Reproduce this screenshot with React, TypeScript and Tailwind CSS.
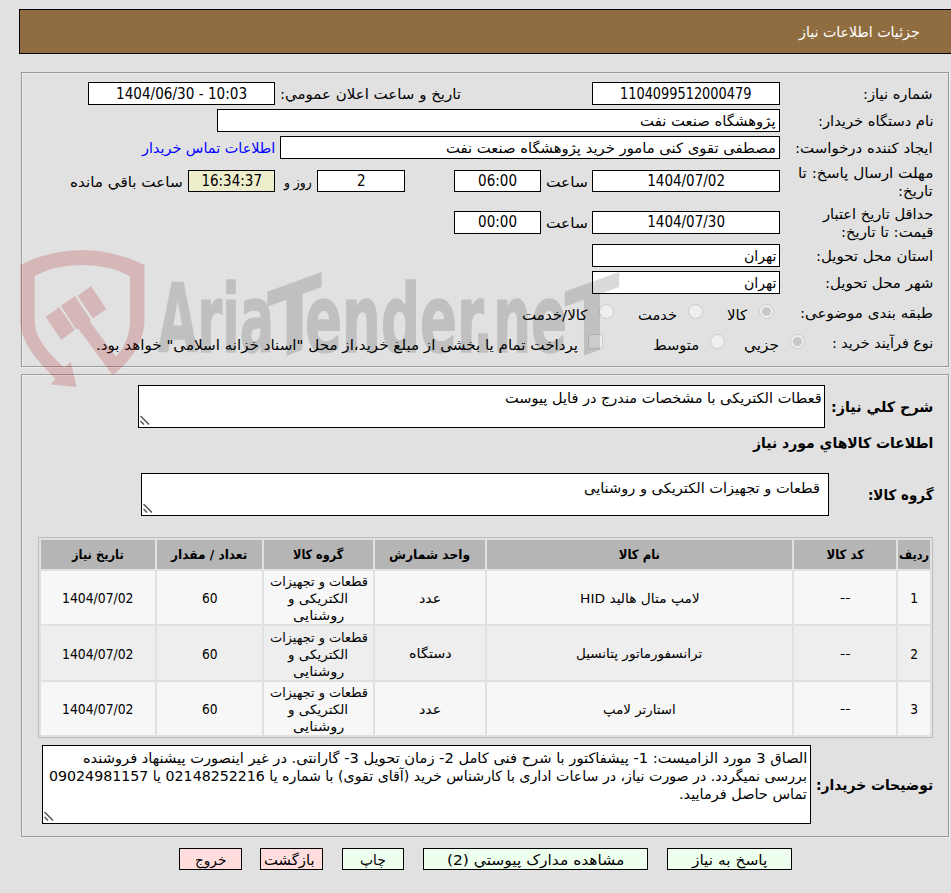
import React, { useLayoutEffect, useRef, useState } from "react";

type TextProps = { w: number; children: React.ReactNode; className?: string; ltr?: boolean };

// A single line of text condensed or widened to a given width.
function T({ w, children, className = "", ltr = false }: TextProps) {
  const ref = useRef<HTMLSpanElement>(null);
  const [scale, setScale] = useState(1);
  useLayoutEffect(() => {
    if (ref.current) setScale(w / ref.current.offsetWidth);
  }, [w]);
  return (
    <span className={`flex shrink-0 whitespace-nowrap ${className}`} style={{ width: w }}>
      <span ref={ref} dir={ltr ? "ltr" : "rtl"} className="inline-block shrink-0 origin-right" style={{ transform: `scaleX(${scale})` }}>
        {children}
      </span>
    </span>
  );
}

// Digits are set slightly larger than the surrounding Persian text.
function Num({ w, children }: { w: number; children: React.ReactNode }) {
  return <T w={w} ltr className="text-[15px]">{children}</T>;
}

function Field({ className, children }: { className: string; children?: React.ReactNode }) {
  return <div className={`flex shrink-0 items-center border border-black ${className}`}>{children}</div>;
}

function Row({ className = "h-[27px]", label, children }: { className?: string; label: React.ReactNode; children: React.ReactNode }) {
  return (
    <div className={`flex items-center ${className}`}>
      <div className="w-[153px] shrink-0">{label}</div>
      {children}
    </div>
  );
}

function Radio({ checked = false, className = "" }: { checked?: boolean; className?: string }) {
  return (
    <span className={`mb-[3px] flex size-[15px] shrink-0 items-center justify-center rounded-full border border-[#cbcbcb] bg-[#efefef] ${className}`}>
      {checked && <span className="size-[9px] rounded-full bg-[#c8c8c8]" />}
    </span>
  );
}

function Area({ className, children }: { className: string; children: React.ReactNode }) {
  return (
    <div className={`relative shrink-0 border border-black bg-white ${className}`}>
      {children}
      <svg className="absolute bottom-[2px] left-[1px]" width="10" height="10" viewBox="0 0 10 10" stroke="#555" strokeWidth="1.5">
        <path d="M0.5 1 L9 9.500 M0.500 6 L4 9.500" />
      </svg>
    </div>
  );
}

function Watermark() {
  return (
    <svg direction="ltr" className="pointer-events-none absolute left-0 top-[240px]" width="640" height="160" viewBox="0 240 640 160">
      <g fill="#b4282d" opacity="0.22">
        <path d="M20.300 265 Q50 250 82 250 Q114 250 144.500 265 V320 C144.500 342 130 362 112.700 375.300 L78.500 329 L75.700 329 L61 305.700 L75 296 L90.500 319.500 L90 322 L116 356.700 Q130 341 130 320 V276 Q109 265 82 265 Q55 265 34.700 276 V320 C34.700 339 48 352 64.300 367.700 L70.700 361.700 L76.700 387 L50.700 384.500 L55.300 379 C38 361 20.300 343 20.300 320 Z" />
        <path d="M45.700 316.700 L59.300 307.300 L74.700 330 L61.300 340 Z" />
        <path d="M77.700 296 L91 286 L106.300 309 L93 318.500 Z" />
      </g>
      <g opacity="0.14" fill="#000" stroke="#000" strokeWidth="1.5" strokeLinejoin="round" className="font-['DejaVu_Sans',sans-serif] text-[95px] font-bold">
        <text x="158" y="352" textLength="116" lengthAdjust="spacingAndGlyphs">Aria</text>
        <text transform="translate(294.500 352) skewY(-20)" x="-27" y="0" textLength="54" lengthAdjust="spacingAndGlyphs">T</text>
        <text x="305" y="352" textLength="179" lengthAdjust="spacingAndGlyphs">ender</text>
        <text x="473" y="352" textLength="94" lengthAdjust="spacingAndGlyphs">.ne</text>
        <text transform="translate(592 352) skewY(-20)" x="-27" y="0" textLength="54" lengthAdjust="spacingAndGlyphs">T</text>
      </g>
    </svg>
  );
}

const cols = [
  { t: "ردیف", w: 30 }, { t: "کد کالا", w: 38 }, { t: "نام کالا", w: 41 }, { t: "واحد شمارش", w: 81 },
  { t: "گروه کالا", w: 50 }, { t: "تعداد / مقدار", w: 76 }, { t: "تاریخ نیاز", w: 52 },
];
const items = [
  { name: "لامپ متال هالید HID", nw: 120, unit: "عدد", uw: 22, bg: "bg-[#f7f7f7]" },
  { name: "ترانسفورماتور پتانسیل", nw: 126, unit: "دستگاه", uw: 43, bg: "bg-[#eeeeee]" },
  { name: "استارتر لامپ", nw: 73, unit: "عدد", uw: 22, bg: "bg-[#f7f7f7]" },
];

const panel = "border border-[#9a9a9a] shadow-[inset_1px_1px_#eeeeee,1px_1px_#eeeeee]";

export default function App() {
  return (
    <div dir="rtl" className="relative h-[893px] w-[951px] overflow-hidden bg-[#e1e1e1] pt-[9px] font-['DejaVu_Sans_Condensed','DejaVu_Sans',sans-serif] text-[14.2px] leading-[18px] text-black">
      <header className="ml-[19px] flex h-[45px] items-center border-y border-l border-black bg-[#8f6d40] pr-[31px] text-white">
        <T w={121}>جزئیات اطلاعات نیاز</T>
      </header>

      <section className={`ml-[21px] mr-[2px] mt-[18px] h-[295px] pr-[15px] pt-[7px] ${panel}`}>
        <Row label={<T w={70}>شماره نیاز:</T>}>
          <Field className="h-[23px] w-[188px] justify-center bg-white"><Num w={131}>1104099512000479</Num></Field>
          <T w={181} className="mr-[131px]">تاریخ و ساعت اعلان عمومي:</T>
          <Field className="mr-[5px] h-[23px] w-[187px] justify-center bg-white"><Num w={131}>1404/06/30 - 10:03</Num></Field>
        </Row>
        <Row label={<T w={116}>نام دستگاه خریدار:</T>}>
          <Field className="h-[23px] w-[563px] bg-white pr-[3px]"><T w={136}>پژوهشگاه صنعت نفت</T></Field>
        </Row>
        <Row label={<T w={138}>ایجاد کننده درخواست:</T>}>
          <Field className="h-[23px] w-[500px] bg-white pr-[3px]"><T w={330}>مصطفی تقوی کنی مامور خرید پژوهشگاه صنعت نفت</T></Field>
          <T w={133} className="mr-[5px] text-[#0000ff]">اطلاعات تماس خریدار</T>
        </Row>
        <Row className="h-[41px]" label={<><T w={135}>مهلت ارسال پاسخ: تا</T><T w={35}>تاریخ:</T></>}>
          <Field className="mb-px h-[22px] w-[188px] justify-center bg-white"><Num w={78}>1404/07/02</Num></Field>
          <T w={42} className="mr-[4px]">ساعت</T>
          <Field className="mb-px mr-[5px] h-[22px] w-[87px] justify-center bg-white"><Num w={39}>06:00</Num></Field>
          <Field className="mb-px mr-[49px] h-[22px] w-[88px] justify-center bg-white"><Num w={9}>2</Num></Field>
          <T w={28} className="mr-[5px]">روز و</T>
          <Field className="mb-px mr-[9px] h-[22px] w-[87px] justify-center bg-[#eeeecc]"><Num w={61}>16:34:37</Num></Field>
          <T w={113} className="mr-[5px]">ساعت باقي مانده</T>
        </Row>
        <Row className="h-[40px]" label={<div className="pt-px"><T w={110}>حداقل تاریخ اعتبار</T><T w={92}>قیمت: تا تاریخ:</T></div>}>
          <Field className="h-[23px] w-[188px] justify-center bg-white"><Num w={78}>1404/07/30</Num></Field>
          <T w={42} className="mr-[4px] pt-px">ساعت</T>
          <Field className="mr-[5px] h-[23px] w-[87px] justify-center bg-white"><Num w={39}>00:00</Num></Field>
        </Row>
        <Row label={<T w={117}>استان محل تحویل:</T>}>
          <Field className="h-[23px] w-[188px] bg-white pr-[3px]"><T w={32}>تهران</T></Field>
        </Row>
        <Row label={<T w={108}>شهر محل تحویل:</T>}>
          <Field className="h-[23px] w-[188px] bg-white pr-[3px]"><T w={32}>تهران</T></Field>
        </Row>
        <Row className="h-[33px]" label={<T w={133}>طبقه بندی موضوعی:</T>}>
          <Radio checked className="mr-[6px]" />
          <T w={20} className="mr-[12px] pt-[5px]">کالا</T>
          <Radio className="mr-[24px]" />
          <T w={39} className="mr-[11px] pt-[5px]">خدمت</T>
          <Radio className="mr-[24px]" />
          <T w={66} className="mr-[11px] pt-[5px]">کالا/خدمت</T>
        </Row>
        <Row className="h-[27px]" label={<T w={101}>نوع فرآیند خرید :</T>}>
          <Radio checked className="-mr-[25px]" />
          <T w={35} className="mr-[11px] pt-[4px]">جزیي</T>
          <Radio className="mr-[19px]" />
          <T w={46} className="mr-[11px] pt-[4px]">متوسط</T>
          <span className="mb-[3px] mr-[50px] size-[15px] shrink-0 rounded-[2px] border border-[#cbcbcb] bg-[#efefef]" />
          <T w={482} className="mr-[10px] pt-[4px]">پرداخت تمام یا بخشی از مبلغ خرید،از محل "اسناد خزانه اسلامی" خواهد بود.</T>
        </Row>
      </section>

      <section className={`ml-[21px] mr-[2px] mt-[7px] h-[463px] pr-[15px] pt-[10px] ${panel}`}>
        <div className="flex items-center">
          <T w={102} className="text-[14.5px] font-bold">شرح کلي نیاز:</T>
          <Area className="mr-[6px] h-[43px] w-[687px] pr-[2px] pt-[3px]"><T w={317}>قعطات الکتریکی با مشخصات مندرج در فایل پیوست</T></Area>
        </div>
        <div className="flex h-[45px] items-start pt-[6px]"><T w={180} className="text-[14.5px] font-bold">اطلاعات کالاهاي مورد نیاز</T></div>
        <div className="flex items-center">
          <T w={65} className="text-[14.5px] font-bold">گروه کالا:</T>
          <Area className="mr-[39px] h-[43px] w-[688px] pr-[8px] pt-[5px]"><T w={236}>قطعات و تجهیزات الکتریکی و روشنایی</T></Area>
        </div>

        <div className="mt-[21px] grid h-[201px] w-[895px] grid-cols-[32px_102px_305px_110px_109px_105px_114px] grid-rows-[29px_53px_54px_53px] gap-[2px] border border-[#bcbcbc] p-[2px] text-[13px] leading-[17px]">
          {cols.map((c) => (
            <div key={c.t} className="flex items-center justify-center bg-[#b5b5b5] font-bold"><T w={c.w}>{c.t}</T></div>
          ))}
          {items.map((it, i) => (
            <React.Fragment key={i}>
              <div className={`flex items-center justify-center pt-[2px] text-[13.6px] ${it.bg}`}><T w={8}>{i + 1}</T></div>
              <div className={`flex items-center justify-center ${it.bg}`}><T w={10}>--</T></div>
              <div className={`flex items-center justify-center pt-px ${it.bg}`}><T w={it.nw}>{it.name}</T></div>
              <div className={`flex items-center justify-center pt-px ${it.bg}`}><T w={it.uw}>{it.unit}</T></div>
              <div className={`flex flex-col items-center justify-center pt-[2px] ${it.bg}`}>
                <T w={98}>قطعات و تجهیزات</T>
                <T w={60}>الکتریکی و</T>
                <T w={51}>روشنایی</T>
              </div>
              <div className={`flex items-center justify-center pt-[2px] text-[13.6px] ${it.bg}`}><T w={16}>60</T></div>
              <div className={`flex items-center justify-center pt-[2px] text-[13.6px] ${it.bg}`}><T w={71} ltr>1404/07/02</T></div>
            </React.Fragment>
          ))}
        </div>

        <div className="mt-[7px] flex items-center">
          <T w={117} className="text-[14.5px] font-bold">توضیحات خریدار:</T>
          <Area className="mr-[5px] h-[79px] w-[769px] pr-[3px] pt-[3px]">
            <T w={724}>الصاق 3 مورد الزامیست: 1- پیشفاکتور با شرح فنی کامل 2- زمان تحویل 3- گارانتی. در غیر اینصورت پیشنهاد فروشنده</T>
            <T w={758}>بررسی نمیگردد. در صورت نیاز، در ساعات اداری با کارشناس خرید (آقای تقوی) با شماره یا 02148252216 یا 09024981157</T>
            <T w={128}>تماس حاصل فرمایید.</T>
          </Area>
        </div>
      </section>

      <footer className="mt-[11px] flex pr-[159px]">
        <button className="flex h-[22px] w-[125px] items-center justify-center border border-black bg-[#eeffee] pt-px"><T w={75}>پاسخ به نیاز</T></button>
        <button className="mr-[19px] flex h-[22px] w-[225px] items-center justify-center border border-black bg-[#eeffee] pt-px"><T w={177}>مشاهده مدارک پیوستي (2)</T></button>
        <button className="mr-[19px] flex h-[22px] w-[62px] items-center justify-center border border-black bg-[#eeffee] pt-px"><T w={26}>چاپ</T></button>
        <button className="mr-[19px] flex h-[22px] w-[63px] items-center justify-center border border-black bg-[#ffdddd] pr-[4px] pt-px"><T w={51}>بازگشت</T></button>
        <button className="mr-[18px] flex h-[22px] w-[63px] items-center justify-center border border-black bg-[#ffdddd] pt-px"><T w={31}>خروج</T></button>
      </footer>
      <Watermark />
    </div>
  );
}
